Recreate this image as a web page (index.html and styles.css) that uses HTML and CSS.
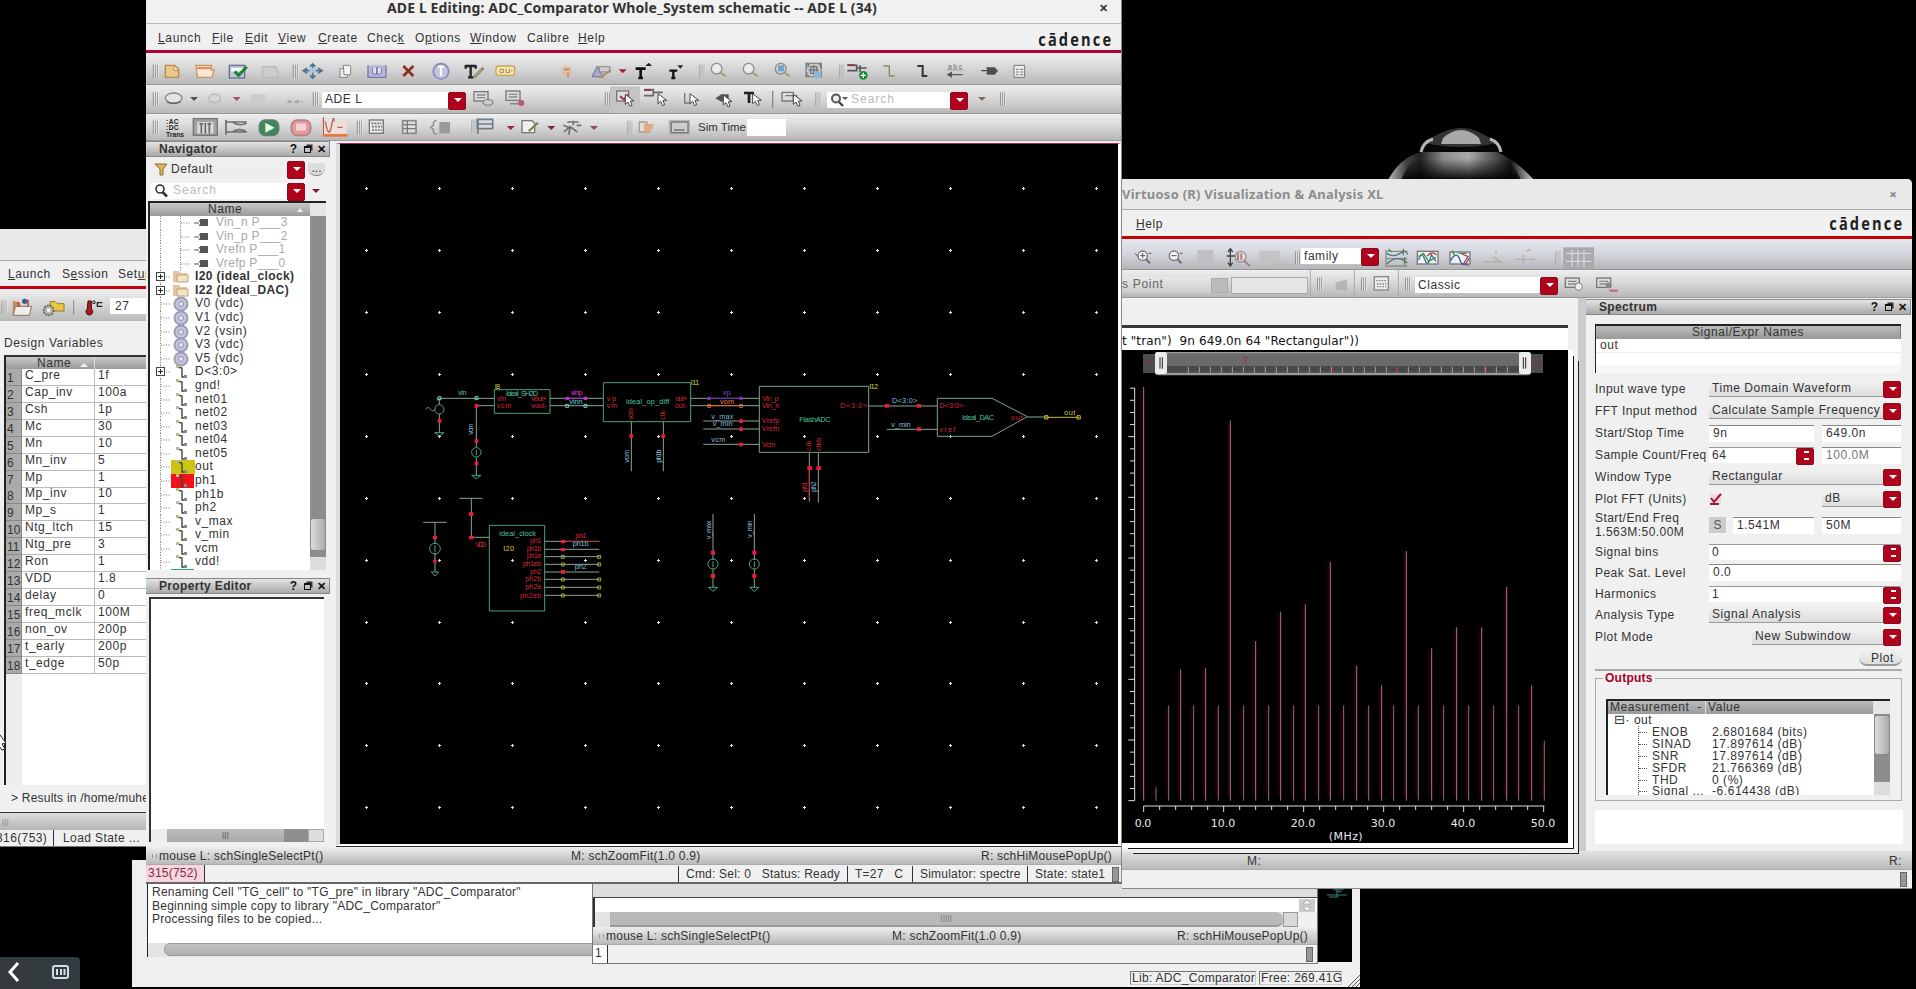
FILE: index.html
```html
<!DOCTYPE html>
<html lang="en">
<head>
<meta charset="utf-8">
<title>ADE L Editing</title>
<link rel="stylesheet" href="styles.css">
</head>
<body>
<svg class="defs" width="0" height="0">
  <defs>
    <linearGradient id="knob" x1="0" x2="1"><stop offset="0" stop-color="#bbb"/><stop offset=".12" stop-color="#444"/><stop offset=".22" stop-color="#222"/><stop offset=".38" stop-color="#8c8c8c"/><stop offset=".55" stop-color="#aaa"/><stop offset=".76" stop-color="#444"/><stop offset=".84" stop-color="#151515"/><stop offset="1" stop-color="#ccc"/></linearGradient>
    <linearGradient id="fade" x1="0" y1="0" x2="0" y2="1"><stop offset="0.2" stop-color="#000" stop-opacity="0"/><stop offset="1" stop-color="#000" stop-opacity=".95"/></linearGradient>
    <g id="grip"><path d="M0-20V20M6-20V20M12-20V20" stroke="#8a8a8a" stroke-width="3"/><path d="M3-20V20M9-20V20M15-20V20" stroke="#f4f4f4" stroke-width="2"/></g>
    <path id="drop" d="M-12-4H12L0 8Z"/>
    <path id="cursor" d="M0 0V30L8 23L14 36L20 33L15 20H26Z" fill="#fff" stroke="#444" stroke-width="3"/>
    <g id="forms"><rect x="-26" y="-22" width="42" height="28" fill="#ddd" stroke="#777" stroke-width="4"/><path d="M-18-12H8M-18-4H8" stroke="#888" stroke-width="4"/></g>
  </defs>
</svg>

<svg class="wallpaper" width="160" height="56" viewBox="0 0 160 56">
  <path d="M7 54C18 34 32 27 42 26H116C130 32 142 42 153 54Z" fill="url(#knob)"/>
  <path d="M20 54C28 36 36 28 46 27H116C126 32 134 40 140 54Z" fill="url(#fade)"/>
  <path d="M40 26C42 16 48 12 62 6Q80-2 98 6C110 12 118 16 120 26Z" fill="#333"/>
  <path d="M62 12Q80-4 98 12L100 18H60Z" fill="#a9a9a9"/>
  <path d="M40 26L44 17Q80 25 116 17L120 26Z" fill="#080808"/>
  <path d="M40 26Q42 16 52 13M120 26Q118 16 109 13" fill="none" stroke="#b5b5b5" stroke-width="3"/>
</svg>

<section class="win ciw">
  <div class="ciw-log">
    <p>Renaming Cell "TG_cell" to "TG_pre" in library "ADC_Comparator"</p>
    <p>Beginning simple copy to library "ADC_Comparator"</p>
    <p>Processing files to be copied...</p>
    <div class="hbar"><i></i></div>
  </div>
  <div class="ciw-black"><svg width="20" height="10" viewBox="0 0 60 30"><path d="M0 18H60M6 24H34M20 2H50M28 8H44M30 2V24" stroke="#33806c" stroke-width="3"/></svg></div>
  <div class="ciw-foot"><span>Lib: ADC_Comparator</span><span>Free: 269.41G</span></div>
  <svg class="resize" width="12" height="12" viewBox="0 0 12 12"><path d="M0 12L12 0M4 12L12 4M8 12L12 8" stroke="#555"/></svg>
</section>

<section class="win sch2">
  <div class="sch2-gap"></div>
  <div class="sch2-text"><svg width="16" height="13" viewBox="0 0 16 13"><path d="M0 0H16V13H0Z" fill="#ccc"/><path d="M8 1L12 5H4ZM8 12L12 8H4Z" fill="#fff" stroke="#999" stroke-width=".7"/></svg></div>
  <div class="sch2-scroll"><i>|||||</i><b></b></div>
  <div class="mouse"><i class="mgrip"></i><span>mouse L: schSingleSelectPt()</span><span>M: schZoomFit(1.0 0.9)</span><span>R: schHiMousePopUp()</span></div>
  <div class="sch2-foot"><span>1</span><em class="sizer"></em></div>
</section>

<section class="win ade">
  <div class="ade-title"></div>
  <nav class="ade-menu"><span><u>L</u>aunch</span><span>S<u>e</u>ssion</span><span>Set<u>u</u>p</span></nav>
  <div class="ade-tools">
    <svg width="110" height="31" viewBox="0 216 330 93">
      <use href="#grip" x="6" y="265"/>
      <path d="M38 245L60 250L62 290H38Z" fill="#c98f54"/><path d="M46 262H95L88 289H40Z" fill="#f1ede8" stroke="#86706a" stroke-width="3"/><circle cx="74" cy="247" r="8" fill="#38619c"/><path d="M52 250L60 262M84 242V262" stroke="#c2473c" stroke-width="5"/>
      <path d="M150 248H166L172 254H192V276H150Z" fill="#edc943" stroke="#98772c" stroke-width="3"/><circle cx="146" cy="274" r="15" fill="#b5b0a9" stroke="#66615c" stroke-width="5" stroke-dasharray="6 3"/><circle cx="146" cy="274" r="6" fill="#eee"/>
      <path d="M221 244V288" stroke="#888" stroke-width="3"/>
      <path d="M264 246H274V270A10 10 0 1 1 262 270Z" fill="#b3151c" stroke="#3d1111" stroke-width="3"/><circle cx="282" cy="250" r="4" fill="none" stroke="#222" stroke-width="3"/><path d="M307 251H292V262H307" fill="none" stroke="#222" stroke-width="4"/>
    </svg>
    <span class="temp">27</span>
  </div>
  <h3>Design Variables</h3>
  <div class="vars" id="vars"><div class="vars-head"><span></span><span>Name <i></i></span><span></span></div></div>
  <p class="results">&gt; Results in /home/muhe</p>
  <div class="ade-mouse">|||</div>
  <div class="ade-foot"><span>316(753)</span><span>Load State ...</span></div>
</section>

<section class="win viva">
  <header class="viva-title"><span>Virtuoso (R) Visualization &amp; Analysis XL</span><b>&#215;</b></header>
  <nav class="viva-menu"><span><u>H</u>elp</span><strong class="logo">cādence</strong></nav>
  <div class="tools viva-t1">
    <svg width="179" height="31" viewBox="36 357 537 93">
      <g fill="#f4f4f4" stroke="#777" stroke-width="4"><circle cx="98" cy="407" r="14"/><path d="M108 417L120 430" stroke-width="7"/><circle cx="192" cy="407" r="14"/><path d="M202 417L214 430" stroke-width="7"/></g>
      <path d="M90 407H106M98 399V415M184 407H200M76 400L84 410M116 400H124M210 400H218" stroke="#555" stroke-width="3"/>
      <rect x="262" y="390" width="48" height="40" fill="#bfbfc2"/><path d="M350 408H376M361 386V438M354 396L361 386L368 396M354 428L361 438L368 428" stroke="#444" stroke-width="4" fill="none"/><circle cx="392" cy="410" r="16" fill="#ddd" stroke="#9a9299" stroke-width="4"/><path d="M384 400V420M394 400V420M402 422L420 438" stroke="#b56b6e" stroke-width="5"/><path d="M448 392H510V430H448Z" fill="#c3c3c6"/><path d="M500 432H518" stroke="#bdbb94" stroke-width="6"/>
      <use href="#grip" x="557" y="414"/>
    </svg>
    <div class="combo w78">family</div>
    <svg width="530" height="31" viewBox="807 357 1590 93">
      <g fill="none" stroke-width="4"><path d="M828 390V438H892M828 394H892M828 416H892" stroke="#89947f"/><path d="M830 400Q850 414 870 400T892 404M830 432Q860 402 892 428" stroke="#4d7488"/><path d="M836 388L846 396M880 386V406M884 412V434" stroke="#55804f"/>
      <rect x="922" y="394" width="62" height="38" stroke="#777" fill="#f3f3f3"/><path d="M926 420Q934 390 944 418T964 404L978 424" stroke="#3b6fa8"/><path d="M952 408Q964 392 980 404" stroke="#bb3636"/><path d="M926 410L940 400L956 424L978 412" stroke="#3d8d47"/>
      <rect x="1020" y="396" width="60" height="36" stroke="#777" fill="#eee"/><path d="M1022 422Q1040 390 1050 420T1078 414" stroke="#3a5fa5"/><path d="M1026 392L1034 408M1046 400H1070" stroke="#458b49"/><path d="M1056 402L1074 410L1060 432L1076 436" stroke="#a84450"/>
      <path d="M1120 426H1180M1150 410L1170 424M1158 390V400M1216 418H1274M1240 404V432M1250 394L1262 388" stroke="#b9aea7"/></g>
      <use href="#grip" x="1338" y="414"/><rect x="1360" y="382" width="92" height="66" fill="#a9a9ae"/><path d="M1368 400H1444M1368 424H1444M1386 390V440M1404 390V440M1422 390V440" stroke="#d7d7d7" stroke-width="4"/>
    </svg>
  </div>
  <div class="tools viva-t2">
    <span class="ghost">s Point</span><span class="ghost-btn"></span><span class="ghost-in"></span>
    <svg width="106" height="27" viewBox="596 454 318 81">
      <path d="M600 454V535M732 454V535M864 454V535" stroke="#aaa" stroke-width="3"/><use href="#grip" x="622" y="496"/><path d="M676 492L710 482V514H676Z" fill="#b5b5b5"/><use href="#grip" x="754" y="496"/><rect x="792" y="474" width="42" height="40" fill="#eee" stroke="#888" stroke-width="4"/><path d="M798 486H828M800 496H828M800 504H828" stroke="#888" stroke-width="4" stroke-dasharray="5 3"/><use href="#grip" x="886" y="496"/>
    </svg>
    <div class="combo w143">Classic</div>
    <svg width="100" height="27" viewBox="1346 454 300 81"><use href="#forms" x="1394" y="500"/><circle cx="1408" cy="504" r="11" fill="#eee" stroke="#888" stroke-width="3"/><use href="#forms" x="1488" y="500"/><circle cx="1498" cy="500" r="9" fill="#888"/><path d="M1500 516H1526" stroke="#bb6872" stroke-width="6"/></svg>
  </div>
  <div class="viva-body">
    <div class="plot-side">
      <div class="plot-expr">t "tran")&nbsp; 9n 649.0n 64 "Rectangular"))</div>
      <svg class="plot" width="446" height="493" viewBox="66 -690 1338 1479">
        <rect x="129" y="-678" width="402" height="57" fill="#4c4c4c"/><rect x="930" y="-678" width="399" height="57" fill="#4c4c4c"/>
        <rect x="165" y="-684" width="1128" height="70" rx="10" fill="#999"/><rect x="200" y="-680" width="1058" height="58" rx="8" fill="#6a6a6a"/><rect x="200" y="-642" width="1058" height="20" fill="#484848"/>
        <path id="ruler" stroke="#a3a3a3" stroke-width="3"/>
        <path d="M436-668V-650M430-668H444M700-640V-624M892-640V-624M1160-640V-624M138-654H160M1296-654H1318" stroke="#b0234c" stroke-width="3"/>
        <rect x="165" y="-684" width="36" height="66" rx="8" fill="#ececec"/><rect x="1257" y="-684" width="36" height="66" rx="8" fill="#ececec"/><path d="M180-668V-634M187-668V-634M1270-668V-634M1277-668V-634" stroke="#222" stroke-width="3"/>
        <g id="bars"></g>
        <path id="axes" stroke="#ddd" stroke-width="3" fill="none"/>
        <g id="ticks" class="tick-labels"></g>
        <text x="737" y="781" class="unit" textLength="102">(MHz)</text>
      </svg>
    </div>
    <aside class="spectrum">
      <div class="dock">Spectrum<b>?</b><b class="pop"></b><b>&#10005;</b></div>
      <div class="names"><div class="names-head">Signal/Expr Names</div><div>out</div></div>
      <div class="form">
        <label>Input wave type</label><div class="combo flat c2">Time Domain Waveform</div>
        <label>FFT Input method</label><div class="combo flat c2">Calculate Sample Frequency</div>
        <label>Start/Stop Time</label><div class="field">9n</div><div class="field">649.0n</div>
        <label>Sample Count/Freq</label><div class="combo spin">64</div><div class="field dim">100.0M</div>
        <label>Window Type</label><div class="combo flat c2">Rectangular</div>
        <label>Plot FFT (Units)</label><div><svg class="check" width="13" height="12" viewBox="0 0 13 12"><path d="M1 1H12V11H1Z" fill="#f7d9e0"/><path d="M2 5L5 9L12 1M1 11H10" stroke="#96183b" stroke-width="2" fill="none"/></svg></div><div class="combo flat">dB</div>
        <label class="two">Start/End Freq<br>1.563M:50.00M</label><div class="pair"><button>S</button><div class="field">1.541M</div></div><div class="field">50M</div>
        <label>Signal bins</label><div class="combo spin c2">0</div>
        <label>Peak Sat. Level</label><div class="field c2">0.0</div>
        <label>Harmonics</label><div class="combo spin c2">1</div>
        <label>Analysis Type</label><div class="combo flat c2">Signal Analysis</div>
        <label>Plot Mode</label><div class="combo flat c2 narrow">New Subwindow</div>
      </div>
      <div class="plot-row"><span>Plot</span></div>
      <fieldset class="outputs"><legend>Outputs</legend>
        <div class="results-box">
          <div class="rb-main">
            <div class="rb-head"><span>Measurement &nbsp;-</span><span>Value</span></div>
            <div class="rb-root"><i>&#8863;</i>&#183; out</div>
            <div class="rb-list" id="measures"></div>
          </div>
          <div class="vscroll small"><i></i></div>
        </div>
      </fieldset>
      <div class="msg"></div>
    </aside>
  </div>
  <div class="viva-mouse"><span>M:</span><span>R:</span></div>
  <div class="viva-foot"><em class="sizer"></em></div>
</section>

<section class="win main">
  <header class="main-title"><span>ADE L Editing: ADC_Comparator Whole_System schematic -- ADE L (34)</span><b>&#10005;</b></header>
  <nav class="main-menu"><span><u>L</u>aunch</span><span><u>F</u>ile</span><span><u>E</u>dit</span><span><u>V</u>iew</span><span><u>C</u>reate</span><span>Chec<u>k</u></span><span>O<u>p</u>tions</span><span><u>W</u>indow</span><span>Calibre</span><span><u>H</u>elp</span><strong class="logo">cādence</strong></nav>
  <div class="tools m1">
    <svg width="974" height="32" viewBox="21 159 2922 96">
      <use href="#grip" x="40" y="214"/><use href="#grip" x="460" y="214"/><use href="#grip" x="1680" y="214"/><use href="#grip" x="2100" y="214"/>
      <path d="M76 196H104L116 208V232H76Z" fill="#e9c98a" stroke="#b28b4e" stroke-width="4"/><path d="M102 198V212H114" fill="#fff2c5" stroke="#b28b4e" stroke-width="3"/>
      <path d="M168 196H214V210H222L216 232H172Z" fill="#f5e6d6" stroke="#cf9560" stroke-width="4"/><path d="M172 204H214" stroke="#d99359" stroke-width="7"/>
      <rect x="268" y="196" width="46" height="38" fill="#bfc4d6" stroke="#676f92" stroke-width="4"/><path d="M274 204H308V214H274Z" fill="#fff"/><path d="M284 214L296 226L320 200" stroke="#18862e" stroke-width="9" fill="none"/>
      <path d="M366 200H408L416 232H370Z" fill="#ccc" stroke="#b5b5b5" stroke-width="3"/>
      <path d="M490 212H546M518 192V234M502 204L490 212L502 220M534 204L546 212L534 220M510 200L518 192L526 200M510 226L518 234L526 226" stroke="#4f7192" stroke-width="5" fill="none"/><rect x="508" y="204" width="20" height="14" fill="#aac7df"/>
      <rect x="600" y="206" width="22" height="26" fill="#eee" stroke="#888" stroke-width="3"/><path d="M610 196H630L632 200V224H612Z" fill="#f5f5f5" stroke="#888" stroke-width="3"/>
      <path d="M684 196V232H738V196" fill="#b6b7d9" stroke="#7778a6" stroke-width="4"/><path d="M698 204V222H724V204" fill="#e4e4f4" stroke="#7778a6" stroke-width="3"/><path d="M711 202V222" stroke="#55568f" stroke-width="4"/>
      <path d="M790 198L820 228M820 198L790 228" stroke="#8d2e1e" stroke-width="8"/>
      <circle cx="903" cy="214" r="23" fill="#c3c5e2" stroke="#8789b5" stroke-width="5"/><path d="M903 200V228M894 200H912" stroke="#fff" stroke-width="6"/>
      <path d="M976 198H1008M992 198V232M984 232H1000M977 196V206M1007 196V206" stroke="#222" stroke-width="7"/><path d="M1002 232L1030 204" stroke="#776e4f" stroke-width="8"/><path d="M1004 230L1028 206" stroke="#eee8bd" stroke-width="3"/>
      <rect x="1068" y="198" width="56" height="28" rx="8" fill="#f5e6b8" stroke="#c9a25d" stroke-width="4"/><path d="M1080 208H1090V218H1080ZM1098 206V218H1108V206M1112 212H1118" stroke="#b08a48" stroke-width="3" fill="none"/>
      <rect x="1268" y="200" width="24" height="26" fill="#e3bb9f"/><path d="M1272 208H1288M1284 218V232" stroke="#c07c54" stroke-width="4"/>
      <path d="M1356 230L1372 198L1390 232Z" fill="#a7adc8" stroke="#73768f" stroke-width="3"/><rect x="1378" y="200" width="32" height="16" fill="#ccc" stroke="#888" stroke-width="3"/><path d="M1382 232L1412 210" stroke="#b6895f" stroke-width="6"/>
      <use href="#drop" x="1448" y="212" fill="#b5173a"/>
      <path d="M1487 206H1517M1502 206V234M1495 234H1509" stroke="#111" stroke-width="8"/><path d="M1516 198L1526 188L1536 198Z" fill="#222"/>
      <path d="M1588 212H1612M1600 212V234M1594 234H1606" stroke="#111" stroke-width="7"/><path d="M1612 196H1630L1621 206Z" fill="#222"/>
      <g fill="#ededed" stroke="#8b8b8b" stroke-width="4"><circle cx="1730" cy="206" r="16"/><circle cx="1826" cy="206" r="16"/><circle cx="1922" cy="206" r="16" fill="#cad7e2"/><rect x="1998" y="190" width="46" height="40" fill="#c5c9cf"/></g>
      <path d="M1742 218L1758 230M1838 218L1854 230M1934 218L1950 230" stroke="#a8a584" stroke-width="7"/><rect x="1914" y="196" width="18" height="18" fill="#78a4c8"/><path d="M2006 200V192H2000V204M2036 192H2042V204M2000 216V228H2008M2021 196V224M2006 210H2036M2012 200H2030V220H2012Z" stroke="#777" stroke-width="4" fill="none"/><circle cx="2032" cy="224" r="10" fill="#8bb6dc"/>
      <path d="M2122 196H2150V212H2122M2150 204H2180M2160 196V216" stroke="#565656" stroke-width="5" fill="none"/><path d="M2122 194H2144" stroke="#a9344b" stroke-width="4"/><circle cx="2170" cy="226" r="13" fill="#188b31"/><path d="M2162 226H2178M2170 218V234" stroke="#fff" stroke-width="4"/>
      <path d="M2230 198H2248V228H2264" stroke="#8c8b61" stroke-width="4" fill="none"/><path d="M2332 198H2348V228H2362" stroke="#333" stroke-width="6" fill="none"/>
      <path d="M2420 210H2470" stroke="#999" stroke-width="3"/><path d="M2430 224H2468M2424 224L2434 218V230Z" stroke="#555" stroke-width="4"/><text x="2424" y="208" class="tiny" textLength="42">abc</text>
      <path d="M2524 212H2546L2540 202M2546 212L2540 222" stroke="#444" stroke-width="4" fill="none"/><path d="M2542 202H2564L2574 212L2564 224H2542Z" fill="#4e4e4e"/>
      <path d="M2622 196H2654V232H2622ZM2628 208H2636M2640 208H2650M2628 216H2636M2640 216H2650M2628 224H2636M2640 224H2650" fill="#ececec" stroke="#787878" stroke-width="3"/>
    </svg>
  </div>
  <div class="tools m2">
    <svg width="175" height="28" viewBox="21 258 525 84">
      <use href="#grip" x="40" y="300"/><ellipse cx="101" cy="297" rx="25" ry="15" fill="#e4e4e4" stroke="#858585" stroke-width="4"/><path d="M80 308Q100 320 122 308" stroke="#666" stroke-width="4" fill="none"/><use href="#drop" x="162" y="298" fill="#555"/><ellipse cx="224" cy="298" rx="18" ry="13" fill="#d6d6d6" stroke="#b9b9b9" stroke-width="4"/><use href="#drop" x="290" y="298" fill="#a5546a"/><path d="M334 286H376V310H334Z" fill="#cbcbcb"/><path d="M442 308H488" stroke="#aaa" stroke-width="8" stroke-dasharray="14 8"/><use href="#grip" x="520" y="300"/>
    </svg>
    <div class="combo w144">ADE L</div>
    <svg width="361" height="28" viewBox="978 258 1083 84">
      <use href="#forms" x="1028" y="300"/><ellipse cx="1044" cy="310" rx="15" ry="9" fill="#ccc" stroke="#888" stroke-width="4"/><use href="#forms" x="1124" y="298"/><path d="M1110 314H1144" stroke="#888" stroke-width="5"/><circle cx="1144" cy="312" r="9" fill="#b35b6c"/>
      <use href="#grip" x="1396" y="300"/><rect x="1410" y="262" width="90" height="80" fill="#c4c4c4"/><rect x="1430" y="276" width="36" height="30" fill="#ddd" stroke="#777" stroke-width="4"/><path d="M1440 292L1452 302L1464 286" stroke="#b52442" stroke-width="6" fill="none"/><use href="#cursor" x="1456" y="286"/>
      <path d="M1512 272H1540V290H1512M1540 280H1568" stroke="#666" stroke-width="5" fill="none"/><path d="M1512 274H1534" stroke="#b52442" stroke-width="4"/><use href="#cursor" x="1554" y="284"/>
      <path d="M1634 282V312H1650" stroke="#777" stroke-width="4" fill="none"/><use href="#cursor" x="1650" y="284"/>
      <path d="M1726 298L1744 286H1766V308H1744Z" fill="#555"/><use href="#cursor" x="1750" y="288"/>
      <path d="M1812 282H1842M1827 282V312" stroke="#222" stroke-width="8"/><use href="#cursor" x="1838" y="284"/><path d="M1898 276V326" stroke="#888" stroke-width="4"/>
      <path d="M1926 280H1960V306H1926ZM1936 290H1970V312" fill="#ddd" stroke="#777" stroke-width="4"/><use href="#cursor" x="1960" y="286"/><use href="#grip" x="2028" y="300"/>
    </svg>
    <div class="combo w141 search"><svg width="18" height="14" viewBox="0 0 18 14"><circle cx="6" cy="5.5" r="4" fill="#eee" stroke="#555" stroke-width="2"/><path d="M9 9L13 13" stroke="#444" stroke-width="2.4"/><path d="M12 4H18L15 7Z" fill="#555"/></svg>Search</div>
    <svg width="60" height="28" viewBox="2484 258 180 84"><use href="#drop" x="2526" y="298" fill="#806f5c"/><use href="#grip" x="2582" y="300"/></svg>
  </div>
  <div class="tools m3">
    <svg width="550" height="27" viewBox="21 342 1650 81">
      <use href="#grip" x="40" y="382"/><text x="78" y="372" class="acdc" textLength="38">:AC</text><text x="78" y="391" class="acdc" textLength="38">:DC</text><text x="78" y="410" class="acdc" textLength="54">Trans</text>
      <rect x="160" y="356" width="72" height="50" fill="#a2a2a2" stroke="#757575" stroke-width="4"/><rect x="172" y="366" width="48" height="34" fill="#ddd"/><path d="M184 368V400M196 368V400M208 368V400M178 372H190M202 372H214" stroke="#666" stroke-width="5"/>
      <path d="M258 360V404M258 366H320M258 396H320M278 366Q296 380 320 370M278 396Q296 382 320 396" stroke="#6d6d6d" stroke-width="5" fill="none"/>
      <rect x="358" y="360" width="58" height="46" rx="18" fill="#3a895b" stroke="#627d6c" stroke-width="5"/><path d="M376 368L404 383L376 398Z" fill="#e9f3e7"/>
      <rect x="454" y="360" width="58" height="46" rx="18" fill="#e5989a" stroke="#b38282" stroke-width="5"/><rect x="468" y="370" width="30" height="22" fill="#f6d1d1"/>
      <rect x="546" y="360" width="74" height="46" fill="#eeded7"/><path d="M550 352V406" stroke="#a13b3b" stroke-width="3"/><path d="M556 364Q566 420 574 380T582 364M592 382H608" stroke="#b56565" stroke-width="4" fill="none"/><path d="M548 406H622" stroke="#e9763f" stroke-width="8"/>
      <use href="#grip" x="652" y="382"/><rect x="688" y="360" width="42" height="40" fill="#e7e7e7" stroke="#777" stroke-width="4"/><path d="M694 370H724M696 380H726M696 390H726" stroke="#777" stroke-width="5" stroke-dasharray="6 3"/>
      <rect x="788" y="362" width="40" height="38" fill="#ddd" stroke="#888" stroke-width="5"/><path d="M790 374H826M790 386H826M802 362V400" stroke="#777" stroke-width="4"/>
      <path d="M890 362Q878 362 880 376L872 382L880 388Q878 402 890 402" stroke="#888" stroke-width="4" fill="none"/><rect x="898" y="366" width="32" height="34" fill="#999"/>
      <use href="#grip" x="996" y="378"/><path d="M1012 358H1058V386H1012ZM1012 372H1058M1014 358V402" fill="#d8dce0" stroke="#6f7d87" stroke-width="5"/><use href="#drop" x="1112" y="382" fill="#9d2140"/>
      <path d="M1146 362H1176L1184 370V398H1146Z" fill="#f0f0ec" stroke="#777" stroke-width="4"/><path d="M1166 394L1194 368" stroke="#787b4b" stroke-width="6"/><use href="#drop" x="1234" y="382" fill="#7a2940"/>
      <path d="M1282 366H1316M1300 362V376M1272 396L1290 380L1312 396M1270 376L1290 384L1286 404M1310 376H1324" stroke="#707070" stroke-width="5" fill="none"/><use href="#drop" x="1362" y="382" fill="#8e4b5c"/>
      <use href="#grip" x="1464" y="382"/><path d="M1498 366H1520L1530 396H1498Z" fill="#e5dcd4" stroke="#a99c91" stroke-width="4"/><path d="M1512 372L1542 372L1530 396H1512Z" fill="#dfad85"/>
      <rect x="1586" y="360" width="64" height="46" fill="#b7b7b7"/><rect x="1594" y="366" width="50" height="32" fill="#ccc" stroke="#777" stroke-width="4"/><path d="M1602 390H1634" stroke="#666" stroke-width="4"/>
    </svg>
    <span class="simtime">Sim Time</span><span class="siminput"></span>
  </div>
  <div class="main-body">
    <aside class="left">
      <div class="dock">Navigator<b>?</b><b class="pop"></b><b>&#10005;</b></div>
      <div class="nav-row first"><div class="combo filter"><svg width="14" height="13" viewBox="0 0 14 13"><path d="M1 1H13L9 6V12H6V6Z" fill="#e0b35c" stroke="#8e6f3c"/></svg>Default</div><span class="more">...</span></div>
      <div class="nav-row"><div class="combo search"><svg width="16" height="14" viewBox="0 0 16 14"><circle cx="6" cy="5" r="4" fill="#fff" stroke="#333" stroke-width="1.6"/><path d="M8.5 8L13 12.5" stroke="#333" stroke-width="2.6"/></svg>Search</div><svg width="10" height="6" viewBox="0 0 10 6" class="navdrop"><path d="M1 1H9L5 5Z" fill="#84193a"/></svg></div>
      <div class="tree">
        <div class="tree-main"><div class="tree-head">Name<svg width="8" height="6" viewBox="0 0 8 6"><path d="M1 5H7L4 1Z" fill="#eee"/></svg></div><div id="tree"></div></div>
        <div class="vscroll"><i></i></div>
      </div>
      <div class="dock prop">Property Editor<b>?</b><b class="pop"></b><b>&#10005;</b></div>
      <div class="propbox"><div class="prop-scroll"><i>|||</i><b></b></div></div>
    </aside>
    <div class="canvas">
      <svg width="777" height="700" viewBox="0 0 777 700">
        <path id="dots" stroke="#e8e8e8" stroke-width="1"/>
        <g transform="translate(70,226) scale(.33333)" fill="none" stroke="#4f9f80" stroke-width="3">
          <g class="wire">
            <path d="M88 85H253M199 107H253M199 107V232M88 85V104M88 132V188M199 262V316M420 85H580M420 107H580M842 85H1048M842 107H1048M880 153H1048M880 177H1048M880 223H1048"/>
            <path d="M664 155V304M760 155V304M148 385H218M184 385V502H238M40 457H110M75 457V522M75 548V606M909 432V570M909 596V652M1033 432V570M1033 596V652"/>
            <path d="M404 514H568M404 538H568M404 560H568M404 583H568M404 606H568M404 628H568M404 652H568M404 676H568"/>
          </g>
          <path d="M253 59H420V130H253ZM580 38H842V155H580ZM238 466H404V723H238Z"/>
          <circle cx="88" cy="118" r="14"/><path d="M46 118Q54 108 62 118T76 116M74 188H102L88 198Z"/><circle cx="199" cy="247" r="14"/><path d="M199 240V256M185 316H213L199 326Z"/>
          <circle cx="75" cy="536" r="16"/><path d="M75 526V546M64 606H86L75 618ZM895 652H923L909 664ZM1019 652H1047L1033 664Z"/><circle cx="909" cy="582" r="15"/><circle cx="1033" cy="582" r="15"/><path d="M909 574V592M1033 574V592M192 85H206M82 82V92"/>
          <path stroke="#6427ae" d="M890 85H992"/><path stroke="#de6b22" d="M890 107H992"/><path stroke="#ab2bc2" d="M471 85H526"/><path stroke="#b02229" d="M470 514H568"/>
          <g stroke="none">
            <path fill="#f5163e" d="M83 147h11v11H83zM194 102h11v11h-11zM194 208h11v11h-11zM194 275h11v11h-11zM658 193h11v11h-11zM754 193h11v11h-11zM988 148h11v11h-11zM988 172h11v11h-11zM988 218h11v11h-11zM177 427h13v11h-13zM177 497h13v11h-13zM69 497h12v11H69zM70 569h10v9H70zM903 542h12v12h-12zM903 612h12v12h-12zM1027 542h12v12h-12zM1027 612h12v12h-12zM453 509h12v11h-12zM453 533h12v11h-12zM453 600h12v11h-12z"/>
            <path fill="#d223d6" d="M467 80h10v10h-10zM521 80h10v10h-10z"/><path fill="#8232b5" d="M892 80h10v10h-10zM988 80h10v10h-10z"/>
          </g>
          <path stroke="#77cbbb" d="M467 103h9v9h-9zM522 103h9v9h-9zM84 80h9v9h-9zM195 80h9v9h-9z"/><path stroke="#de6b22" d="M893 103h9v9h-9zM989 103h9v9h-9z"/>
          <path stroke="#a5a832" d="M454 556h9v9h-9zM454 579h9v9h-9zM454 624h9v9h-9zM454 648h9v9h-9zM454 672h9v9h-9zM563 556h9v9h-9zM563 579h9v9h-9zM563 624h9v9h-9zM563 648h9v9h-9zM563 672h9v9h-9z"/>
          <g class="lbl">
            <g fill="#50c49b"><text x="144" y="76" textLength="26">vin</text><text x="288" y="78" textLength="96">Ideal_SH2D</text><text x="648" y="102" textLength="130">ideal_op_diff</text><text x="268" y="498" textLength="110">ideal_clock</text></g>
            <g fill="#d2cf3c"><text x="254" y="56" textLength="16">I8</text><text x="842" y="44" textLength="26">I11</text><text x="280" y="543" textLength="32">I20</text></g>
            <text x="482" y="76" fill="#e035df" textLength="36">vinp</text><text x="478" y="102" fill="#5fd6dc" textLength="40">vinn</text><text x="938" y="76" fill="#8746cc" textLength="24">vp</text><text x="930" y="101" fill="#e2854b" textLength="42">vom</text>
            <g fill="#82b9dd"><text x="904" y="147" textLength="66">v_max</text><text x="908" y="169" textLength="60">v_min</text><text x="904" y="216" textLength="42">vcm</text><text x="488" y="529" textLength="48">ph1b</text><text x="494" y="598" textLength="36">ph2</text><text transform="translate(188 194) rotate(-90)" textLength="34">vcm</text><text transform="translate(656 278) rotate(-90)" textLength="38">vcm</text><text transform="translate(752 278) rotate(-90)" textLength="40">ph1b</text><text transform="translate(902 508) rotate(-90)" textLength="56">v_max</text><text transform="translate(1025 504) rotate(-90)" textLength="52">v_min</text></g>
            <g fill="#d3263a"><text x="260" y="92" textLength="28">vin</text><text x="260" y="113" textLength="44">vcm</text><text x="364" y="92" textLength="46">vout+</text><text x="364" y="113" textLength="46">vout-</text><text x="590" y="92" textLength="28">vp</text><text x="590" y="113" textLength="32">vm</text><text x="796" y="92" textLength="36">out+</text><text x="794" y="113" textLength="38">out-</text><text x="496" y="505" textLength="34">ph1</text><text x="196" y="530" textLength="34">VDD</text>
            <text x="360" y="519" textLength="34">ph1</text><text x="350" y="543" textLength="44">ph1b</text><text x="350" y="565" textLength="44">ph1e</text><text x="338" y="588" textLength="56">ph1eb</text><text x="360" y="611" textLength="34">ph2</text><text x="346" y="634" textLength="48">ph2b</text><text x="346" y="658" textLength="48">ph2e</text><text x="330" y="683" textLength="64">ph2eb</text>
            <text transform="translate(670 150) rotate(-90)" textLength="36">vcm</text><text transform="translate(766 150) rotate(-90)" textLength="28">clk</text></g>
          </g>
        </g>
        <g transform="translate(400,216) scale(.33333)" fill="none" stroke="#4f9f80" stroke-width="3">
          <path d="M58 79H386V277H58ZM592 115H756L862 170L756 229H592Z" class="box"/>
          <g class="wire"><path d="M386 138H592M440 208H592M862 171H920M208 277V425M235 277V428"/></g>
          <path stroke="#c2bd36" d="M918 172H1018M914 167h10v10h-10zM1011 167h10v10h-10z"/><path stroke="#b92c30" d="M208 330V415"/>
          <path fill="#f5163e" stroke="none" d="M435 132h12v11h-12zM531 132h12v11h-12zM531 202h12v11h-12zM202 319h14v11h-14zM229 319h14v11h-14z"/>
          <g class="lbl"><g fill="#50c49b"><text x="178" y="185" textLength="94">FlashADC</text><text x="666" y="180" textLength="96">Ideal_DAC</text></g>
            <g fill="#d2cf3c"><text x="388" y="86" textLength="26">I12</text><text x="972" y="164" textLength="34">out</text></g>
            <g fill="#82b9dd"><text x="456" y="130" textLength="76">D&lt;3:0&gt;</text><text x="454" y="201" textLength="58">v_min</text><text transform="translate(228 396) rotate(-90)" textLength="32">ph2</text></g>
            <g fill="#d3263a"><text x="66" y="122" textLength="50">Vin_p</text><text x="66" y="144" textLength="52">Vin_n</text><text x="66" y="190" textLength="52">Vrefp</text><text x="66" y="213" textLength="52">Vrefn</text><text x="66" y="260" textLength="40">Vcm</text><text x="300" y="144" textLength="82">D&lt;3:0&gt;</text><text x="598" y="144" textLength="72">D&lt;3:0&gt;</text><text x="598" y="216" textLength="48">vref</text><text x="812" y="180" textLength="36">out</text><text transform="translate(200 396) rotate(-90)" textLength="32">ph1</text><text transform="translate(214 272) rotate(-90)" textLength="30">clk</text><text transform="translate(242 272) rotate(-90)" textLength="38">clkb</text></g>
          </g>
        </g>
      </svg>
    </div>
  </div>
  <div class="mouse main-mouse"><i class="mgrip"></i><span>mouse L: schSingleSelectPt()</span><span>M: schZoomFit(1.0 0.9)</span><span>R: schHiMousePopUp()</span></div>
  <div class="main-foot"><span class="pink">315(752)</span><span class="cmd">Cmd: Sel: 0 &nbsp; Status: Ready</span><span class="tmp">T=27 &nbsp; C</span><span class="sim">Simulator: spectre</span><span class="sta">State: state1</span><em class="sizer"></em></div>
</section>

<div class="dockbar">
  <svg width="80" height="32" viewBox="0 0 80 32"><path d="M18 6L10 15L18 24" fill="none" stroke="#fff" stroke-width="3"/><rect x="53" y="9" width="15" height="12" rx="2" fill="none" stroke="#cfe0e2" stroke-width="2"/><path d="M57 12V18M61 12V18M64.5 12V18" stroke="#cfe0e2" stroke-width="2"/></svg>
</div>
<svg class="pointer" width="8" height="20" viewBox="0 0 8 20"><path d="M-3-1L6 11L2 12L5 17L2 18L-2 13Z" fill="#fff" stroke="#222"/></svg>
<script src="app.js"></script>
</body>
</html>
```
FILE: styles.css
```css
* { box-sizing: border-box; }
body { margin: 0; width: 1916px; height: 989px; overflow: hidden; position: relative; background: #000; color: #333; font: 12px/14px "Liberation Sans", Arial, sans-serif; letter-spacing: .55px; white-space: nowrap; }
p, h3 { margin: 0; font: inherit; }
svg { display: block; flex: none; }
.defs { position: absolute; }
.wallpaper { position: absolute; left: 1381px; top: 126px; }
.win { position: absolute; background: #f0f0f0; display: flex; flex-direction: column; overflow: hidden; }
.logo { font: bold 17px/20px "Open Sans", sans-serif; letter-spacing: 2.5px; color: #222; transform: scaleX(.86); transform-origin: right; }
.tools { display: flex; align-items: center; background: linear-gradient(#eee, #d6d6d6 50%, #b8b8b8); border-bottom: 1px solid #999; flex: none; }

/* drop-down and spin fields */
.combo { position: relative; height: 16px; background: #fff; padding-left: 3px; line-height: 15px; flex: none; display: flex; align-items: center; }
.combo::after { content: ""; position: absolute; right: 0; top: 0; width: 16px; height: 100%; background: #b0031b; border-radius: 2px; border: 1px solid #8d0b20; }
.combo::before { content: ""; position: absolute; z-index: 1; right: 4px; top: 6px; border: 4px solid transparent; border-top-color: #fff; border-bottom: 0; }
.flat { background: linear-gradient(#f0f0f0, #ddd); border-bottom: 1px solid #999; }
.spin { border-top: 1px solid #999; }
.spin::before { top: 3px; height: 9px; border: 0; width: 7px; background: linear-gradient(#fff, #fff) center 0/5px 2px no-repeat, linear-gradient(#fff, #fff) center 100%/5px 2px no-repeat; }
.w78 { width: 78px; } .w143 { width: 143px; } .w144 { width: 144px; } .w141 { width: 141px; }
.search { color: #b9b9b9; gap: 3px; letter-spacing: 1px; }
.filter { gap: 3px; background: #eee; }

/* dock headers */
.dock { height: 16px; background: linear-gradient(#e4e4e4, #a9a9a9); border: 1px solid #888; border-left: 0; padding: 0 3px 0 13px; font-weight: bold; line-height: 13px; letter-spacing: .35px; display: flex; align-items: center; gap: 6px; flex: none; color: #333; margin-right: 1px; }
.dock b { width: 9px; color: #111; text-align: center; letter-spacing: 0; }
.dock b:first-of-type { margin-left: auto; }
.dock b:last-child { font-size: 11px; }
.dock .pop { height: 7px; border: 1px solid #111; border-top-width: 2px; box-shadow: 2px -2px 0 -0.5px #333; width: 7px; }

.vscroll { width: 16px; background: linear-gradient(#e5e5e5 13px, #8d8d8d 13px, #8d8d8d calc(100% - 13px), #ddd calc(100% - 13px)); display: flex; flex-direction: column; }
.vscroll i { height: 33px; background: linear-gradient(90deg, #ddd, #aaa); border: 1px solid #888; border-radius: 3px; }
.mouse { height: 18px; flex: none; background: linear-gradient(#eee, #b9b9b9); border-bottom: 1px solid #aaa; display: flex; align-items: center; letter-spacing: .25px; }
.mgrip { width: 5px; height: 4px; margin-left: 6px; border-left: 1px solid #999; border-right: 1px solid #999; }
.sizer { width: 7px; height: 15px; background: #96969d; border: 1px solid #666; }

/* CIW */
.ciw { left: 132px; top: 860px; width: 1228px; height: 127px; background: #efefef; }
.ciw-log { margin: 23px 0 0 15px; width: 446px; height: 74px; background: #fff; border-left: 1px solid #222; padding-left: 4px; }
.ciw-log p { height: 13.7px; line-height: 14px; padding-top: 2px; letter-spacing: .24px; }
.hbar { margin: 19px 0 0 -4px; height: 14px; background: #e3e3e3; }
.hbar i { display: block; margin-left: 16px; height: 13px; background: linear-gradient(#c2c2c2, #b1b1b1); border: 1px solid #999; border-radius: 6px 0 0 6px; }
.ciw-black { position: absolute; left: 1186px; top: 20px; width: 34px; height: 82px; background: #000; padding: 9px 9px; }
.ciw-foot { margin: 14px 0 0 998px; display: flex; gap: 3px; letter-spacing: .3px; }
.ciw-foot span { border: 1px solid #777; border-right-color: #ccc; border-bottom-color: #ccc; height: 14px; line-height: 13px; padding-left: 1px; }
.ciw-foot span:first-child { width: 126px; } .ciw-foot span:last-child { width: 83px; }
.resize { position: absolute; right: 0; bottom: 0; }

/* second schematic window */
.sch2 { left: 592px; top: 880px; width: 726px; height: 84px; border: 1px solid #777; border-top: 0; }
.sch2-gap { height: 18px; background: #ddd; border-bottom: 1px solid #444; }
.sch2-text { height: 14px; background: #fff; border-left: 2px solid #333; display: flex; justify-content: flex-end; padding: 1px 2px; }
.sch2-scroll { height: 15px; display: flex; margin-right: 19px; background: #e4e4e4; border-left: 2px solid #333; padding-left: 15px; font-size: 7px; line-height: 12px; color: #666; }
.sch2-scroll i { flex: 1; background: #b9b9b9; border-bottom: 2px solid #999; border-radius: 0 7px 7px 0; text-align: center; font-style: normal; }
.sch2-scroll b { width: 15px; background: #d9d9d9; border: 1px solid #999; }
.sch2 .mouse span:nth-of-type(1) { width: 288px; padding-left: 2px; }
.sch2 .mouse span:nth-of-type(2) { width: 285px; }
.sch2-foot { height: 18px; display: flex; justify-content: space-between; align-items: center; padding-right: 4px; }
.sch2-foot span { width: 15px; padding-left: 2px; border-right: 1px solid #333; height: 18px; line-height: 17px; background: #fff; }

/* ADE L */
.ade { left: 0; top: 229px; width: 150px; height: 618px; background: #f0f0f0; border-bottom: 1px solid #777; }
.ade-title { height: 32px; background: #e9e9e9; border-bottom: 1px solid #aaa; flex: none; }
.ade-menu { height: 28px; border-bottom: 3px solid #c5000f; display: grid; grid-template-columns: 54px 56px 40px; padding: 6px 0 0 8px; flex: none; }
.ade-tools { height: 32px; flex: none; display: flex; align-items: center; background: linear-gradient(#f0f0f0, #b9b9b9); padding-top: 2px; }
.temp { background: #fff; height: 16px; width: 50px; padding-left: 5px; line-height: 16px; }
.ade h3 { margin: 15px 0 5px 4px; height: 14px; letter-spacing: .6px; flex: none; }
.vars { height: 430px; border-left: 2px solid #222; border-top: 2px solid #333; margin-left: 4px; background: linear-gradient(90deg, #eee 16px, #fff 16px); flex: none; }
.vars-head, .var { display: grid; grid-template-columns: 16px 73px 1fr; height: 16.93px; }
.vars-head { height: 12px; background: linear-gradient(#c9c9c9, #999); line-height: 12px; }
.vars-head span:nth-child(2) { padding-left: 15px; border-right: 1px solid #ddd; }
.vars-head i { display: inline-block; border: 4px solid transparent; border-bottom-color: #eee; border-top: 0; margin-left: 5px; }
.var span { border-bottom: 1px solid #bbb; border-right: 1px solid #bbb; padding-left: 3px; line-height: 12px; }
.var span:first-child { background: #aaa; padding: 3px 0 0 1px; letter-spacing: 0; border-color: #888; line-height: 13px; }
.results { margin-left: 11px; line-height: 14px; height: 28px; padding-top: 6px; flex: none; letter-spacing: .22px; }
.ade-mouse { height: 18px; margin-top: -1px; border-top: 1px solid #333; background: linear-gradient(#ddd, #b5b5b5); padding-left: 2px; font-size: 7px; line-height: 17px; flex: none; color: #777; }
.ade-foot { display: flex; height: 18px; line-height: 17px; letter-spacing: .4px; }
.ade-foot span:first-child { margin-left: -4px; width: 58px; border-right: 1px solid #333; margin-right: 9px; }

/* visualization */
.viva { left: 1122px; top: 179px; width: 790px; height: 710px; border-bottom: 1px solid #888; border-radius: 0 5px 0 0; }
.viva-title { height: 31px; flex: none; background: #e9e9e9; border-bottom: 1px solid #aaa; display: flex; justify-content: space-between; align-items: center; font: bold 13px/30px "Noto Sans", sans-serif; color: #8d8d8d; letter-spacing: .25px; padding-right: 15px; }
.viva-menu { height: 29px; flex: none; border-bottom: 3px solid #c90000; display: flex; justify-content: space-between; align-items: center; padding: 2px 8px 0 14px; }
.viva-t1 { height: 31px; background: linear-gradient(#e6e8f3, #d4d5dc 50%, #b5b6ba); }
.viva-t1 .combo, .viva-t2 .combo { margin-top: 4px; }
.viva-t2 { height: 28px; }
.viva-t2 .combo { margin-top: 3px; }
.ghost { width: 89px; height: 16px; background: linear-gradient(#e8e8e8, #ccc); color: #666; line-height: 15px; margin-top: 3px; letter-spacing: .7px; }
.ghost-btn { width: 17px; height: 15px; background: #bbb; border: 1px solid #aaa; margin-top: 3px; }
.ghost-in { width: 77px; margin: 3px 1px 0 3px; height: 17px; background: #e6e6e6; border: 1px solid #aaa; }
.viva-body { display: flex; height: 553px; flex: none; }
.plot-side { width: 464px; border-right: 8px solid #ccc; padding-top: 27px; }
.plot-expr { position: relative; z-index: 1; width: 446px; height: 25px; border-top: 3px solid #3a3a3a; background: #fff; color: #111; padding-top: 2px; font: 12px/23px "DejaVu Sans", sans-serif; letter-spacing: .1px; }
.plot { background: #000; box-shadow: 0 0 0 5px #fff, 6px 6px 0 0 #111, 10px 10px 0 0 #eee, 11px 11px 0 0 #222; clip-path: inset(0 -12px -12px 0); }
.tick-labels text, .unit { fill: #e8e8e8; font: 33px "DejaVu Sans", sans-serif; letter-spacing: 0; text-anchor: middle; }
.spectrum { width: 326px; padding-top: 1px; display: flex; flex-direction: column; }
.names { margin: 9px 11px 0 9px; height: 49px; border-top: 2px solid #222; border-left: 1px solid #222; background: linear-gradient(#fff 39px, #f7f7f7 39px); line-height: 12px; flex: none; }
.names-head { background: linear-gradient(#bbb, #999); text-align: center; height: 13px; border-right: 1px solid #777; }
.names div:last-child { padding-left: 4px; border-bottom: 1px solid #eee; height: 14px; }
.form { margin: 5px 10px 0 9px; display: grid; grid-template-columns: 114px 113px 79px; grid-template-rows: repeat(6, 22px) 31px 21px 21px 21px 22px 22px; align-items: center; flex: none; width: 306px; }
.form > .c2 { grid-column: 2 / 4; }
.form > label + div:not(.c2) { margin-right: 8px; }
.form > label { letter-spacing: .45px; }
.form .two { line-height: 13.5px; }
.field { height: 17px; background: #fff; border-top: 1px solid #888; padding-left: 4px; line-height: 15px; }
.dim { color: #777; }
.pair { display: flex; gap: 7px; } .pair .field { flex: 1; }
.pair button { width: 17px; height: 16px; border: 0; padding: 0; background: #ccc; font: inherit; color: #555; }
.narrow { margin-left: 43px; }
.plot-row { display: flex; justify-content: flex-end; height: 23px; margin: 0 10px 0 9px; border-bottom: 2px solid #aaa; flex: none; padding-top: 3px; }
.plot-row span { width: 43px; height: 15px; background: linear-gradient(#f0f0f0, #ddd); border-bottom: 2px solid #999; border-radius: 0 0 8px 8px; padding-left: 12px; }
.outputs { margin: 1px 10px 0 9px; border: 1px solid #aaa; height: 129px; padding: 14px 11px 0 10px; flex: none; min-width: 0; }
.outputs legend { color: #a5001f; font-weight: bold; padding: 0 2px; margin-left: -3px; line-height: 13px; letter-spacing: .25px; }
.results-box { height: 96px; display: flex; border-top: 2px solid #222; border-left: 2px solid #222; overflow: hidden; background: #fff; }
.rb-main { flex: 1; }
.rb-head { display: grid; grid-template-columns: 98px 1fr; background: linear-gradient(#bbb, #999); height: 13px; line-height: 13px; }
.rb-head span { border-right: 1px solid #ddd; padding-left: 2px; }
.rb-root { height: 12px; line-height: 13px; padding-left: 6px; }
.rb-root i { font: 13px/12px "DejaVu Sans", sans-serif; }
.rb-list { margin-left: 30px; border-left: 1px dotted #555; }
.rb-list div { display: grid; grid-template-columns: 13px 60px 1fr; height: 11.9px; line-height: 12px; }
.rb-list div::before { content: ""; width: 8px; border-top: 1px dotted #555; margin-top: 6px; }
.small i { margin-top: 14px; height: 40px; }
.msg { margin: 9px 9px 0 9px; background: #fff; height: 34px; flex: none; }
.viva-mouse { height: 19px; flex: none; background: linear-gradient(#e2e2e2, #b9b9b9); border-bottom: 1px solid #aaa; display: flex; justify-content: space-between; padding: 3px 10px 0 125px; }
.viva-foot { display: flex; justify-content: flex-end; padding: 2px 5px 0 0; }

/* main schematic editor */
.main { left: 146px; top: 0; width: 976px; height: 884px; border-right: 1px solid #888; border-bottom: 2px solid #666; }
.main-title { height: 24px; flex: none; border-bottom: 1px solid #bbb; background: #f1f1f1; font: bold 14px/15px "Noto Sans", sans-serif; letter-spacing: .12px; color: #333; padding-left: 241px; display: flex; justify-content: space-between; padding-right: 13px; }
.main-title b { font-size: 11px; }
.main-menu { height: 29px; flex: none; border-bottom: 3px solid #b5003c; display: grid; grid-template-columns: 54px 33px 33px 40px 49px 48px 55px 57px 51px 1fr auto; padding: 7px 8px 0 12px; letter-spacing: .65px; }
.main-menu .logo { margin-top: -1px; }
.m1, .m2, .m3 { padding-left: 1px; }
.m1 { height: 32px; } .m2 { height: 29px; } .m3 { height: 27px; }
.m2 .combo { margin-top: 1px; }
.tiny { font: 20px "Liberation Sans", sans-serif; fill: #666; letter-spacing: 0; }
.acdc { font: bold 20px "Liberation Sans", sans-serif; fill: #222; letter-spacing: 0; }
.simtime { width: 50px; padding-left: 1px; font-size: 11.5px; letter-spacing: 0; } .siminput { width: 39px; height: 17px; background: #fff; }
.main-body { display: flex; height: 706px; flex: none; }
.left { width: 185px; flex: none; display: flex; flex-direction: column; }
.nav-row { height: 21px; display: flex; align-items: center; padding-left: 5px; gap: 3px; flex: none; margin-top: .5px; }
.nav-row .combo { width: 154px; }
.nav-row.first { margin-top: 1.5px; }
.more { background: #ddd; width: 17px; height: 13px; border-radius: 0 0 8px 8px; border-bottom: 1px solid #888; line-height: 10px; text-align: center; letter-spacing: 0; }
.navdrop { margin-left: 3px; }
.tree { display: flex; width: 178px; height: 369px; margin-left: 2px; border-top: 2px solid #222; border-left: 2px solid #222; background: #fff; overflow: hidden; flex: none; }
.tree-main { flex: 1; overflow: hidden; }
.tree .vscroll i { margin-top: 315px; }
.tree-head { height: 13px; background: linear-gradient(#c8c8c8, #999); line-height: 13px; padding-left: 58px; display: flex; align-items: center; gap: 54px; }
.node { height: 13.58px; display: flex; align-items: center; line-height: 13.58px; padding-left: 3px; }
.node svg { overflow: visible; margin-right: 4px; }
.node.pin { color: #aaa; letter-spacing: .3px; } .node.pin svg { margin-right: 5px; } .node.bold { font-weight: bold; letter-spacing: .4px; }
.prop { margin-top: 8px; }
.propbox { margin: 3px 0 0 3px; width: 175px; height: 245px; border-left: 2px solid #333; border-top: 2px solid #333; background: #fff; flex: none; display: flex; align-items: flex-end; }
.prop-scroll { display: flex; width: 100%; height: 13px; background: linear-gradient(90deg, #eee 16px, #8f8f8f 16px); justify-content: space-between; padding-left: 16px; }
.prop-scroll i { width: 117px; background: linear-gradient(#bbb, #aaa); text-align: center; font-size: 7px; line-height: 12px; } .prop-scroll b { width: 16px; background: #ddd; border: 1px solid #aaa; }
.canvas { margin: 2px 0 0 auto; width: 785px; height: 703px; border-left: 4px solid #ddd; border-right: 3px solid #fff; border-bottom: 2px solid #fff; border-top: 1px solid #b02a50; background: #000; box-shadow: 0 1px 0 #333; overflow: hidden; }
.wire { stroke: #86a79a; }
.box { stroke: #75a78e; }
.lbl { stroke: none; font: 22px "Liberation Sans", sans-serif; letter-spacing: 0; }
.main-mouse span:nth-of-type(1) { width: 414px; padding-left: 2px; } .main-mouse span:nth-of-type(2) { width: 410px; }
.main-foot { display: flex; height: 18px; align-items: center; padding-right: 2px; }
.main-foot span { border-left: 1px solid #333; height: 17px; padding-left: 7px; line-height: 17px; letter-spacing: .22px; flex: none; }
.main-foot .pink { background: #f7d5de; color: #7b2d45; width: 59px; border-left: 0; border-right: 1px solid #333; padding-left: 2px; height: 18px; }
.cmd { margin-left: 473px; width: 169px; } .tmp { width: 65px; } .sim { width: 115px; } .sta { width: 84px; }
.main-foot .sizer { margin-left: auto; }

.dockbar { position: absolute; left: 0; top: 957px; width: 80px; height: 32px; background: #343b3e; border-radius: 0 4px 0 0; }
.pointer { position: absolute; left: 0; top: 732px; }
```
FILE: app.js
```js
const $ = id => document.getElementById(id);

const vars = [['C_pre', '1f'], ['Cap_inv', '100a'], ['Csh', '1p'], ['Mc', '30'], ['Mn', '10'], ['Mn_inv', '5'], ['Mp', '1'], ['Mp_inv', '10'], ['Mp_s', '1'], ['Ntg_ltch', '15'], ['Ntg_pre', '3'], ['Ron', '1'], ['VDD', '1.8'], ['delay', '0'], ['freq_mclk', '100M'], ['non_ov', '200p'], ['t_early', '200p'], ['t_edge', '50p']];
vars.forEach(([n, v], i) => $('vars').insertAdjacentHTML('beforeend', `<div class="var"><span>${i + 1}</span><span>${n}</span><span>${v}</span></div>`));

const line = '<path d="M7.5 0V14M8 7H17" stroke="#777" stroke-dasharray="1 1.5" fill="none"/>';
const plus = '<rect x="3.5" y="2.5" width="8" height="8" fill="#fff" stroke="#444"/><path d="M5 6.5H10M7.5 4V9" stroke="#222"/>';
const icon = {
  pin: '<path d="M7.5 0V14M27.5 0V14M28 7H37" stroke="#777" stroke-dasharray="1 1.5"/><path d="M41 7H46M46 4L48 7L46 10" stroke="#555" fill="none"/><rect x="47" y="3" width="8" height="7" fill="#555"/>',
  inst: line + plus + '<path d="M20 1H26L28 3H34V12H20Z" fill="#e8c2a0"/><path d="M24 5H35V12H24Z" fill="#eee5c3" stroke="#bfa180"/>',
  src: line + '<circle cx="28" cy="7" r="6.5" fill="#c4c4dc" stroke="#9c9dbb" stroke-width="2"/><circle cx="28" cy="7" r="2.5" fill="#e2e2ef" stroke="#8f90ad"/>',
  net: line + '<path d="M24 2L29 3V12H33" stroke="#444" fill="none" stroke-width="1.4"/><rect x="23" y="0" width="3" height="3" fill="#bcbb8c"/><rect x="31" y="10" width="3" height="3" fill="#888"/>'
};
icon.bus = icon.net.replace(line, line + plus);
icon.out = '<rect x="18" y="0" width="24" height="14" fill="#c9c512"/>' + icon.net;
icon.ph1 = '<rect x="18" y="0" width="23" height="14" fill="#f4101b"/>' + icon.net;
const nodes = [['pin', 'Vin_n P___3'], ['pin', 'Vin_p P___2'], ['pin', 'Vrefn P___1'], ['pin', 'Vrefp P___0'], ['inst', 'I20 (ideal_clock)'], ['inst', 'I22 (Ideal_DAC)'], ['src', 'V0 (vdc)'], ['src', 'V1 (vdc)'], ['src', 'V2 (vsin)'], ['src', 'V3 (vdc)'], ['src', 'V5 (vdc)'], ['bus', 'D&lt;3:0&gt;'], ['net', 'gnd!'], ['net', 'net01'], ['net', 'net02'], ['net', 'net03'], ['net', 'net04'], ['net', 'net05'], ['out', 'out'], ['ph1', 'ph1'], ['net', 'ph1b'], ['net', 'ph2'], ['net', 'v_max'], ['net', 'v_min'], ['net', 'vcm'], ['net', 'vdd!']];
nodes.forEach(([k, t]) => {
  const w = k === 'pin' ? 58 : 38;
  $('tree').insertAdjacentHTML('beforeend', `<div class="node ${k}${k === 'inst' ? ' bold' : ''}"><svg width="${w}" height="13.58" viewBox="0 0 ${w} 13.58">${icon[k]}</svg>${t}</div>`);
});
$('tree').insertAdjacentHTML('beforeend', '<svg width="50" height="3" viewBox="0 0 50 3"><rect x="21" width="23" height="3" fill="#1fae79"/></svg>');

let d = '';
for (let x = 0; x < 11; x++) for (let y = 0; y < 11; y++) {
  const px = Math.round(26 + x * 73), py = Math.round(44 + y * 61.93);
  d += `M${px - 1} ${py + .5}h3M${px + .5} ${py - 1}v3`;
}
$('dots').setAttribute('d', d);

const bars = [[131, -579], [168, 622], [206, 376], [242, 268], [281, 376], [317, 264], [355, 376], [391, -479], [431, 376], [467, 183], [506, 376], [542, 95], [581, 376], [616, 72], [656, 376], [691, -54], [731, 376], [770, 257], [806, 376], [845, 316], [881, 376], [919, -87], [955, 376], [995, 204], [1031, 376], [1070, 142], [1106, 376], [1145, 142], [1181, 376], [1220, 20], [1256, 376], [1295, 316], [1333, 482]];
$('bars').innerHTML = bars.map(([x, y]) => `<path d="M${x - 5} ${y + 8}V650" stroke="#1e0006" stroke-width="9"/><path d="M${x} ${y}V662" stroke="${y < 370 ? '#ae727d' : '#8d6c72'}" stroke-width="3"/>`).join('');

let a = 'M104-576V662M131 678H1333';
for (let i = 0; i <= 34; i++) a += `M${i % 5 ? 90 : 85} ${662 - i * 36.4}H104`;
for (let i = 0; i <= 25; i++) a += `M${131 + i * 48} 678v${i % 5 ? 12 : 18}`;
$('axes').setAttribute('d', a);
$('ticks').innerHTML = [0, 10, 20, 30, 40, 50].map(v => `<text x="${129 + v * 24}" y="742" textLength="${v ? 73 : 50}">${v}.0</text>`).join('');
let r = '';
for (let x = 265; x < 1250; x += 33) r += `M${x}-640V-622`;
$('ruler').setAttribute('d', r);

[['ENOB', '2.6801684 (bits)'], ['SINAD', '17.897614 (dB)'], ['SNR', '17.897614 (dB)'], ['SFDR', '21.766369 (dB)'], ['THD', '0 (%)'], ['Signal ...', '-6.614438 (dB)']].forEach(([n, v]) => $('measures').insertAdjacentHTML('beforeend', `<div><span>${n}</span><span>${v}</span></div>`));
```
